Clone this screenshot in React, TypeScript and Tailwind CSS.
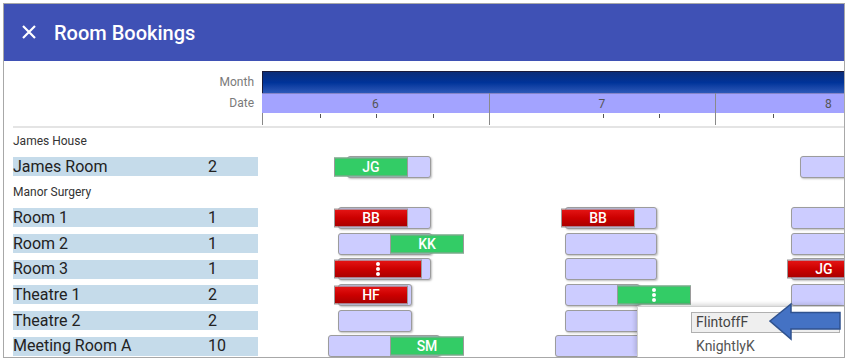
import React from "react";

type Bar = { left: number; width: number; kind: "slot" | "red" | "green"; label?: string };
type Row =
  | { type: "group"; name: string }
  | { type: "room"; name: string; count: number; bars: Bar[] };

const DAY = 226.5;
const days = ["6", "7", "8"];

const rows: Row[] = [
  { type: "group", name: "James House" },
  {
    type: "room",
    name: "James Room",
    count: 2,
    bars: [
      { left: 85, width: 84, kind: "slot" },
      { left: 72, width: 74, kind: "green", label: "JG" },
      { left: 538, width: 92, kind: "slot" },
    ],
  },
  { type: "group", name: "Manor Surgery" },
  {
    type: "room",
    name: "Room 1",
    count: 1,
    bars: [
      { left: 76, width: 93, kind: "slot" },
      { left: 72, width: 74, kind: "red", label: "BB" },
      { left: 303, width: 92, kind: "slot" },
      { left: 299, width: 74, kind: "red", label: "BB" },
      { left: 529, width: 92, kind: "slot" },
    ],
  },
  {
    type: "room",
    name: "Room 2",
    count: 1,
    bars: [
      { left: 76, width: 94, kind: "slot" },
      { left: 128, width: 74, kind: "green", label: "KK" },
      { left: 303, width: 92, kind: "slot" },
      { left: 529, width: 92, kind: "slot" },
    ],
  },
  {
    type: "room",
    name: "Room 3",
    count: 1,
    bars: [
      { left: 76, width: 93, kind: "slot" },
      { left: 72, width: 88, kind: "red", label: "..." },
      { left: 303, width: 92, kind: "slot" },
      { left: 529, width: 92, kind: "slot" },
      { left: 525, width: 74, kind: "red", label: "JG" },
    ],
  },
  {
    type: "room",
    name: "Theatre 1",
    count: 2,
    bars: [
      { left: 76, width: 74, kind: "slot" },
      { left: 72, width: 74, kind: "red", label: "HF" },
      { left: 303, width: 75, kind: "slot" },
      { left: 355, width: 74, kind: "green", label: "..." },
      { left: 529, width: 92, kind: "slot" },
    ],
  },
  {
    type: "room",
    name: "Theatre 2",
    count: 2,
    bars: [
      { left: 76, width: 74, kind: "slot" },
      { left: 303, width: 92, kind: "slot" },
    ],
  },
  {
    type: "room",
    name: "Meeting Room A",
    count: 10,
    bars: [
      { left: 66, width: 112, kind: "slot" },
      { left: 128, width: 74, kind: "green", label: "SM" },
      { left: 293, width: 112, kind: "slot" },
    ],
  },
];

function Dots() {
  return (
    <svg width="6" height="15" viewBox="0 0 6 15">
      <circle cx="3" cy="2.5" r="2" fill="white" />
      <circle cx="3" cy="7.5" r="2" fill="white" />
      <circle cx="3" cy="12.5" r="2" fill="white" />
    </svg>
  );
}

function BarView({ bar }: { bar: Bar }) {
  const pos = { left: bar.left, width: bar.width };
  if (bar.kind === "slot") {
    return (
      <div
        className="absolute top-1/2 -translate-y-1/2 h-[22px] bg-[#ccccff] border border-[#9c9c9c] rounded-[3px] shadow-[1px_1px_2px_rgba(0,0,0,0.25)]"
        style={pos}
      />
    );
  }
  const color =
    bar.kind === "red"
      ? "bg-linear-to-b from-[#e41414] via-[#cc0000] to-[#a90000]"
      : "bg-[#33cc66]";
  return (
    <div
      className={`absolute top-1/2 -translate-y-1/2 h-[19px] ${color} border border-[#9a9a9a] flex items-center justify-center text-white text-[14px] font-medium`}
      style={pos}
    >
      {bar.label === "..." ? <Dots /> : bar.label}
    </div>
  );
}

export default function App() {
  const ticks: number[] = [];
  for (let d = 0; d < days.length; d++) {
    for (let q = 1; q < 4; q++) ticks.push(d * DAY + (q * DAY) / 4);
  }

  return (
    <div className="w-[848px] h-[361px] bg-white pt-[3px] pl-[3px] font-['Roboto',sans-serif]">
      <div className="relative w-[842px] h-[355px] border border-[#a8a8a8] overflow-hidden flex flex-col">
        <div className="h-[57px] shrink-0 bg-[#3f51b5] flex items-center pl-[18px] text-white">
          <svg width="14" height="14" viewBox="0 0 14 14" className="mt-[-1px]">
            <path d="M1 1L13 13M13 1L1 13" stroke="white" strokeWidth="2.2" />
          </svg>
          <span className="ml-[18px] text-[20px] font-medium">Room Bookings</span>
        </div>

        <div className="flex pt-[10px]">
          <div className="w-[258px] shrink-0 flex flex-col items-end pr-[8px] text-[12px] text-[#7a7a7a]">
            <div className="h-[22px] flex items-center">Month</div>
            <div className="h-[20px] flex items-center">Date</div>
          </div>
          <div className="flex-1 relative">
            <div className="h-[22px] border-t border-l border-[#1a1a3a] bg-linear-to-b from-[#0b2c78] via-[#003399] to-[#2c58b8]" />
            <div className="h-[20px] bg-[#a3a3ff] border-t border-[#8585c8] flex">
              {days.map((d) => (
                <div
                  key={d}
                  className="shrink-0 flex items-center justify-center text-[12px] text-[#555]"
                  style={{ width: DAY }}
                >
                  {d}
                </div>
              ))}
            </div>
            <div className="h-[12px] relative border-l border-[#888]">
              {ticks.map((t, i) =>
                i % 4 === 3 ? null : (
                  <div key={i} className="absolute top-[1px] w-px h-[4px] bg-[#555]" style={{ left: t }} />
                )
              )}
            </div>
            {[1, 2].map((d) => (
              <div
                key={d}
                className="absolute top-[22px] h-[32px] w-px bg-[#8a8a8a]"
                style={{ left: d * DAY }}
              />
            ))}
          </div>
        </div>

        <div className="ml-[9px] mt-[1px] h-[2px] bg-[#e4e4e4] shrink-0" />

        <div className="flex flex-col">
          {rows.map((row, i) =>
            row.type === "group" ? (
              <div key={i} className="h-[25.7px] shrink-0 flex items-center pl-[9px] text-[12px] text-[#333]">
                {row.name}
              </div>
            ) : (
              <div key={i} className="h-[25.7px] shrink-0 flex items-center">
                <div className="w-[258px] shrink-0 pl-[9px]">
                  <div className="w-[245px] h-[19px] bg-[#c5dbea] flex items-center text-[16px] text-[#222]">
                    <span className="w-[195px]">{row.name}</span>
                    <span>{row.count}</span>
                  </div>
                </div>
                <div className="flex-1 relative h-full">
                  {row.bars.map((b, j) => (
                    <BarView key={j} bar={b} />
                  ))}
                </div>
              </div>
            )
          )}
        </div>

        <div className="absolute left-[633px] top-[302px] right-0 bottom-0 bg-white border-l border-t border-[#cfcfcf] shadow-[-2px_-2px_4px_rgba(0,0,0,0.15)]">
          <div className="ml-[53px] mt-[5px] w-[149px] h-[21px] bg-[#efefef] border border-[#b0b0b0] flex items-center pl-[4px] text-[14px] text-[#444]">
            FlintoffF
          </div>
          <div className="ml-[58px] mt-[3px] h-[20px] flex items-center text-[14px] text-[#555]">KnightlyK</div>
        </div>

        <svg className="absolute left-[765px] top-[299px]" width="76" height="38" viewBox="0 0 76 38">
          <polygon
            points="1,18 22,1 22,9.5 71,9.5 71,26 22,26 22,36"
            fill="#4472c4"
            stroke="#2f528f"
            strokeWidth="1.5"
          />
        </svg>
      </div>
    </div>
  );
}
